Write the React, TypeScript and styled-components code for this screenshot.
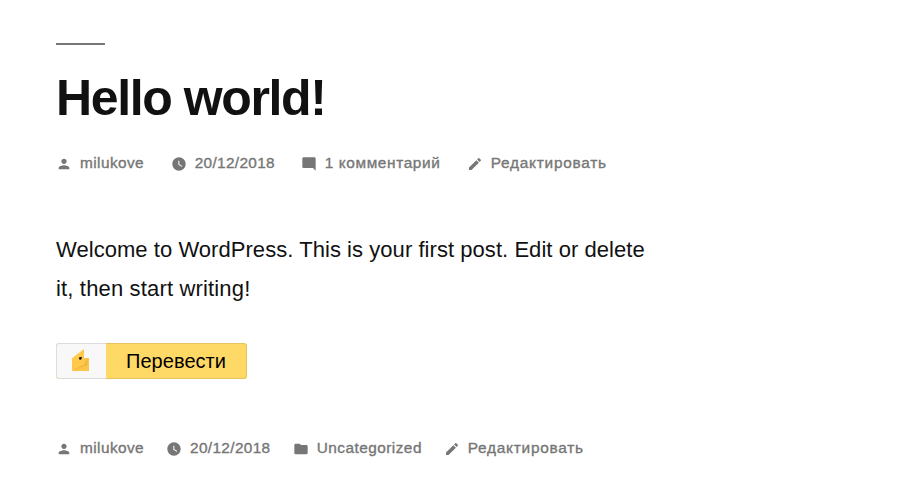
import React from 'react';
import styled, { createGlobalStyle } from 'styled-components';

const GlobalStyle = createGlobalStyle`
  body {
    margin: 0;
    background: #fff;
    color: #111;
    font-family: 'Liberation Sans', Arial, sans-serif;
    -webkit-font-smoothing: antialiased;
  }
`;

const Article = styled.article`
  box-sizing: border-box;
  width: 902px;
  height: 492px;
  padding: 43px 56px 0;
  overflow: hidden;
`;

const Rule = styled.div`
  width: 49px;
  height: 2px;
  background: #767676;
`;

const Title = styled.h1`
  margin: 22px 0 0;
  height: 62px;
  font-size: 50px;
  line-height: 62px;
  font-weight: 700;
  letter-spacing: -1.38px;
  white-space: nowrap;
`;

const MetaRow = styled.div<{ $top: number }>`
  display: flex;
  height: 20px;
  margin-top: ${(p) => p.$top}px;
  color: #767676;
`;

const MetaItem = styled.span<{ $width: number }>`
  display: flex;
  flex: none;
  gap: 8px;
  width: ${(p) => p.$width}px;
`;

const Icon = styled.svg`
  flex: none;
  width: 16px;
  height: 16px;
  margin-top: 2px;
  fill: currentColor;
`;

const Label = styled.span<{ $track: number }>`
  font-size: 15.4px;
  line-height: 18px;
  letter-spacing: ${(p) => p.$track}px;
  white-space: nowrap;
  -webkit-text-stroke: 0.35px currentColor;
`;

const Body = styled.p`
  margin: 56px 0 0;
  font-size: 22px;
  line-height: 39px;
  white-space: nowrap;
`;

const Line = styled.span<{ $track: number }>`
  display: block;
  letter-spacing: ${(p) => p.$track}px;
`;

const TranslateButton = styled.button`
  display: flex;
  box-sizing: border-box;
  width: 191px;
  height: 36px;
  margin: 35px 0 0;
  padding: 0;
  border: 0;
  border-radius: 3px;
  overflow: hidden;
  background: #ffd966;
  color: #000;
  font: 20px/36px 'Liberation Sans', Arial, sans-serif;
`;

const Logo = styled.span`
  box-sizing: border-box;
  flex: none;
  width: 50px;
  height: 36px;
  padding: 5px 0 0 15px;
  border: 1px solid #dcdcda;
  border-right: 0;
  border-radius: 3px 0 0 3px;
  background: #f8f8f8;
`;

const Bird = styled.svg`
  display: block;
  width: 17px;
  height: 22px;
`;

const ButtonText = styled.span`
  box-sizing: border-box;
  flex: 1;
  height: 36px;
  padding-left: 20px;
  border: 1px solid #e6c35c;
  border-left: 0;
  border-radius: 0 3px 3px 0;
  line-height: 35px;
  text-align: left;
  letter-spacing: 0.05px;
`;

const paths = {
  person:
    'M12 12c2.21 0 4-1.79 4-4s-1.79-4-4-4-4 1.79-4 4 1.79 4 4 4zm0 2c-2.67 0-8 1.34-8 4v2h16v-2c0-2.66-5.33-4-8-4z',
  clock:
    'M12 2C6.5 2 2 6.5 2 12s4.5 10 10 10 10-4.5 10-10S17.5 2 12 2zm4.2 14.2L11 13V7h1.5v5.2l4.5 2.7-.8 1.3z',
  comment:
    'M21.99 4c0-1.1-.89-2-1.99-2H4c-1.1 0-2 .9-2 2v12c0 1.1.9 2 2 2h14l4 4-.01-18z',
  edit:
    'M3 17.25V21h3.75L17.81 9.94l-3.75-3.75L3 17.25zM20.71 7.04c.39-.39.39-1.02 0-1.41l-2.34-2.34c-.39-.39-1.02-.39-1.41 0l-1.83 1.83 3.75 3.75 1.83-1.83z',
  folder:
    'M10 4H4c-1.1 0-1.99.9-1.99 2L2 18c0 1.1.9 2 2 2h16c1.1 0 2-.9 2-2V8c0-1.1-.9-2-2-2h-8l-2-2z',
};

interface MetaEntry {
  icon: keyof typeof paths;
  text: string;
  width: number;
  track: number;
}

const headerMeta: MetaEntry[] = [
  { icon: 'person', text: 'milukove', width: 114.7, track: 0.42 },
  { icon: 'clock', text: '20/12/2018', width: 130, track: 0.32 },
  { icon: 'comment', text: '1 комментарий', width: 166, track: 0.62 },
  { icon: 'edit', text: 'Редактировать', width: 150, track: 0.76 },
];

const footerMeta: MetaEntry[] = [
  { icon: 'person', text: 'milukove', width: 110, track: 0.42 },
  { icon: 'clock', text: '20/12/2018', width: 126.7, track: 0.35 },
  { icon: 'folder', text: 'Uncategorized', width: 151, track: 0.46 },
  { icon: 'edit', text: 'Редактировать', width: 150, track: 0.76 },
];

const Meta = ({ entries, top }: { entries: MetaEntry[]; top: number }) => (
  <MetaRow $top={top}>
    {entries.map((e) => (
      <MetaItem key={e.icon} $width={e.width}>
        <Icon viewBox="0 0 24 24">
          <path d={paths[e.icon]} />
        </Icon>
        <Label $track={e.track}>{e.text}</Label>
      </MetaItem>
    ))}
  </MetaRow>
);

export default function App() {
  return (
    <>
      <GlobalStyle />
      <Article>
        <Rule />
        <Title>Hello world!</Title>
        <Meta entries={headerMeta} top={25} />
        <Body>
          <Line $track={0.05}>Welcome to WordPress. This is your first post. Edit or delete</Line>
          <Line $track={0.16}>it, then start writing!</Line>
        </Body>
        <TranslateButton>
          <Logo>
            <Bird viewBox="0 0 17 22">
              <path d="M12 9h5v13H0V9.2z" fill="#fcc548" />
              <path d="M0 9.2 12 0v15.5L0 21.5z" fill="#ffc94a" />
              <path d="M1 21 12 15.5 15.5 9v7.2z" fill="#eeb640" />
              <path d="M7 8.6l2.7-.8v2L8.2 11 7 10z" fill="#111" />
            </Bird>
          </Logo>
          <ButtonText>Перевести</ButtonText>
        </TranslateButton>
        <Meta entries={footerMeta} top={60} />
      </Article>
    </>
  );
}
